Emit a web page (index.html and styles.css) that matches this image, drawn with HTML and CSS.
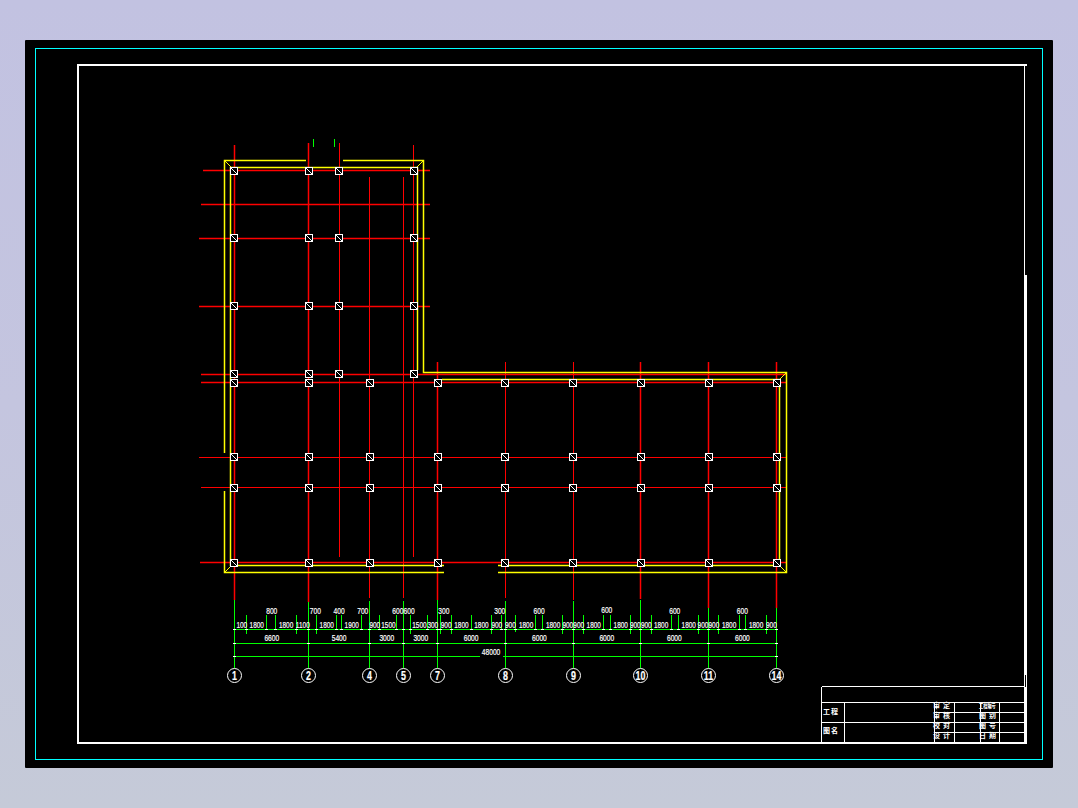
FILE: index.html
```html
<!DOCTYPE html>
<html lang="zh">
<head>
    <meta charset="UTF-8">
    <title>基础平面图</title>
    <link rel="stylesheet" href="styles.css">
</head>
<body>
    <div class="sheet">
        <svg class="drawing" viewBox="25 40 1028 728" width="1028" height="728">
            <defs>
                <g id="node">
                    <rect class="node-box" x="-3.5" y="-3.5" width="7" height="7"></rect>
                    <path class="node-cut" d="M-3 -3L3 3"></path>
                </g>
                <g id="upper-row">
                    <use href="#node" x="234"></use>
                    <use href="#node" x="309"></use>
                    <use href="#node" x="339"></use>
                    <use href="#node" x="414"></use>
                </g>
                <g id="lower-row">
                    <use href="#node" x="234"></use>
                    <use href="#node" x="309"></use>
                    <use href="#node" x="370"></use>
                    <use href="#node" x="438"></use>
                    <use href="#node" x="505"></use>
                    <use href="#node" x="573"></use>
                    <use href="#node" x="641"></use>
                    <use href="#node" x="709"></use>
                    <use href="#node" x="777"></use>
                </g>
            </defs>

            <!-- 图框 -->
            <rect class="cyan" x="35.5" y="48.5" width="1007" height="711"></rect>
            <path class="frame" d="M77 64H1027V66H1025V275H1027V744H77ZM79 66V742H1024V66ZM1025 675V687H1026V675Z"></path>

            <!-- 轴线 -->
            <path class="red" d="M339.5 143V557M369.5 177V598M403.5 177V598M413.5 145V557M505.5 362V598M573.5 362V600"></path>
            <path class="red heavy" d="M234.5 145V600M308.5 143V602M437.5 362V600M640.5 362V599M708.5 362V608M776.5 362V608"></path>
            <path class="red" d="M199 457.5H787M201 487.5H787"></path>
            <path class="red heavy" d="M203 170.5H430M201 204.5H430M199 238.5H430M199 306.5H430M201 374.5H787M201 382.5H787M200 562.5H787"></path>

            <!-- 墙线 -->
            <path class="yellow heavy" d="M224.5 453V160.5H306M343 160.5H423.5V372.5H786.5V572.5H498M444 572.5H224.5V491"></path>
            <path class="yellow heavy" d="M417.5 370V167.5H230.5V565.5H444M498 565.5H779.5V379.5H442"></path>
            <path class="yellow" d="M225 161L231 167M423 161L417 167M786 373L780 379M780 566L786 572M225 572L231 566"></path>

            <!-- 柱 -->
            <use href="#upper-row" y="171"></use>
            <use href="#upper-row" y="238"></use>
            <use href="#upper-row" y="306"></use>
            <use href="#upper-row" y="374"></use>
            <use href="#lower-row" y="383"></use>
            <use href="#lower-row" y="457"></use>
            <use href="#lower-row" y="488"></use>
            <use href="#lower-row" y="563"></use>

            <!-- 尺寸线 -->
            <path class="green" d="M313.5 139V147M334.5 139V147"></path>
            <path class="green" d="M234.5 600V668M308.5 602V668M369.5 601V668M403.5 601V668M437.5 600V668M505.5 601V668M573.5 601V668M640.5 600V668M708.5 608V668M776.5 608V668"></path>
            <path class="green" d="M234 629.5H777M234 643.5H777M234 656.5H480M503 656.5H777"></path>
            <path class="green" d="M246.5 615V634M266.5 615V629M275.5 615V629M296.5 615V634M316.5 615V634M336.5 615V629M341.5 615V629M361.5 615V629M379.5 615V629M396.5 615V629M410.5 615V634M427.5 615V629M440.5 615V634M451.5 615V634M471.5 615V629M491.5 615V634M501.5 615V629M515.5 615V632M535.5 615V629M542.5 615V629M562.5 615V634M583.5 615V634M603.5 615V629M610.5 615V629M630.5 615V634M651.5 615V634M671.5 615V629M678.5 615V629M698.5 615V634M718.5 615V634M739.5 615V629M745.5 615V629M766.5 615V634"></path>
            <path class="ticks" d="M233 629.5h3M245 629.5h3M265 629.5h3M274 629.5h3M295 629.5h3M307 629.5h3M315 629.5h3M335 629.5h3M340 629.5h3M360 629.5h3M368 629.5h3M378 629.5h3M395 629.5h3M402 629.5h3M409 629.5h3M426 629.5h3M436 629.5h3M439 629.5h3M450 629.5h3M470 629.5h3M490 629.5h3M500 629.5h3M504 629.5h3M514 629.5h3M534 629.5h3M541 629.5h3M561 629.5h3M572 629.5h3M582 629.5h3M602 629.5h3M609 629.5h3M629 629.5h3M639 629.5h3M650 629.5h3M670 629.5h3M677 629.5h3M697 629.5h3M707 629.5h3M717 629.5h3M738 629.5h3M744 629.5h3M765 629.5h3M775 629.5h3"></path>
            <path class="ticks" d="M233 643.5h3M307 643.5h3M368 643.5h3M402 643.5h3M436 643.5h3M504 643.5h3M572 643.5h3M639 643.5h3M707 643.5h3M775 643.5h3M233 656.5h3M775 656.5h3"></path>

            <!-- 分段尺寸 -->
            <g class="dim dim-fine">
                <text x="241.7" y="628">100</text>
                <text x="256.7" y="628">1800</text>
                <text x="286" y="628">1800</text>
                <text x="302.7" y="628">1100</text>
                <text x="326.7" y="628">1800</text>
                <text x="351.7" y="628">1900</text>
                <text x="374.7" y="628">900</text>
                <text x="388.3" y="628">1500</text>
                <text x="419.3" y="628">1500</text>
                <text x="432.7" y="628">300</text>
                <text x="446" y="628">900</text>
                <text x="461.3" y="628">1800</text>
                <text x="481.3" y="628">1800</text>
                <text x="496.7" y="628">900</text>
                <text x="510.3" y="628">900</text>
                <text x="526" y="628">1800</text>
                <text x="553" y="628">1800</text>
                <text x="567.7" y="628">900</text>
                <text x="578.6" y="628">900</text>
                <text x="593.7" y="628">1800</text>
                <text x="620.7" y="628">1800</text>
                <text x="635.2" y="628">900</text>
                <text x="646.2" y="628">900</text>
                <text x="661" y="628">1800</text>
                <text x="688.7" y="628">1800</text>
                <text x="702.9" y="628">900</text>
                <text x="713.8" y="628">900</text>
                <text x="729" y="628">1800</text>
                <text x="756" y="628">1800</text>
                <text x="771.3" y="628">900</text>
            </g>

            <!-- 柱距尺寸 -->
            <g class="dim">
                <text x="271.7" y="614">800</text>
                <text x="315.3" y="614">700</text>
                <text x="339" y="614">400</text>
                <text x="362.7" y="614">700</text>
                <text x="397.7" y="614">600</text>
                <text x="409" y="614">600</text>
                <text x="443.7" y="614">300</text>
                <text x="499.7" y="614">300</text>
                <text x="539" y="614">600</text>
                <text x="606.7" y="613">600</text>
                <text x="674.7" y="614">600</text>
                <text x="742.3" y="614">600</text>

                <text x="271.7" y="641">6600</text>
                <text x="339" y="641">5400</text>
                <text x="386.7" y="641">3000</text>
                <text x="420.7" y="641">3000</text>
                <text x="471" y="641">6000</text>
                <text x="539.3" y="641">6000</text>
                <text x="606.7" y="641">6000</text>
                <text x="674.3" y="641">6000</text>
                <text x="742.3" y="641">6000</text>

                <text x="491" y="655">48000</text>
            </g>

            <!-- 轴号 -->
            <g class="bubbles">
                <circle cx="234.5" cy="675.5" r="7"></circle>
                <circle cx="308.5" cy="675.5" r="7"></circle>
                <circle cx="369.5" cy="675.5" r="7"></circle>
                <circle cx="403.5" cy="675.5" r="7"></circle>
                <circle cx="437.5" cy="675.5" r="7"></circle>
                <circle cx="505.5" cy="675.5" r="7"></circle>
                <circle cx="573.5" cy="675.5" r="7"></circle>
                <circle cx="640.5" cy="675.5" r="7"></circle>
                <circle cx="708.5" cy="675.5" r="7"></circle>
                <circle cx="776.5" cy="675.5" r="7"></circle>
            </g>
            <g class="dim axis-no">
                <text x="234.5" y="680">1</text>
                <text x="308.5" y="680">2</text>
                <text x="369.5" y="680">4</text>
                <text x="403.5" y="680">5</text>
                <text x="437.5" y="680">7</text>
                <text x="505.5" y="680">8</text>
                <text x="573.5" y="680">9</text>
                <text x="640.5" y="680">10</text>
                <text x="708.5" y="680">11</text>
                <text x="776.5" y="680">14</text>
            </g>

            <!-- 图签 -->
            <path class="block" d="M821.5 686.5H1025M821.5 686.5V743M821.5 702.5H1025M821.5 722.5H934M934 712.5H1025M934 722.5H1025M934 732.5H1025M844.5 702.5V743M934.5 702.5V743M954.5 702.5V743M980.5 702.5V743M999.5 702.5V743"></path>
            <g class="block-text">
                <text x="823" y="714" textLength="15">工程</text>
                <text x="823" y="733" textLength="15">图名</text>
                <text x="933" y="708" textLength="17">审定</text>
                <text x="933" y="718" textLength="17">审核</text>
                <text x="933" y="728" textLength="17">校对</text>
                <text x="933" y="738" textLength="17">设计</text>
                <text class="dense" x="979" y="708">工程编号</text>
                <text x="979" y="718" textLength="17">图别</text>
                <text x="979" y="728" textLength="17">图号</text>
                <text x="979" y="738" textLength="17">日期</text>
            </g>
        </svg>
    </div>
</body>
</html>
```

FILE: styles.css
```css
html,body{
    margin: 0;
    padding: 0;
}
body{
    padding: 40px 25px;
    background-image: linear-gradient(to bottom,#c2c2e1,#c4c5df 50%,#c5cad8);
}
/* 模型空间 */
.sheet{
    width: 1028px;
    height: 728px;
    background: #000;
    border-radius: 1px;
}
.drawing{
    display: block;
    shape-rendering: crispEdges;
}
.drawing path,
.drawing rect{
    fill: none;
    stroke-width: 1;
}

/* 图层颜色 */
.cyan{
    stroke: #0ff;
}
.drawing .frame{
    fill: #fff;
    fill-rule: evenodd;
    stroke: none;
}
.red{
    stroke: #f00;
}
.yellow{
    stroke: #ff0;
}
.green{
    stroke: #0f0;
}
.ticks,
.block{
    stroke: #fff;
}
/* 粗线 */
.drawing .heavy{
    stroke-width: 1.5;
    shape-rendering: auto;
}

/* 柱 */
.drawing .node-box{
    fill: #000;
    stroke: #fff;
}
.node-cut{
    stroke: #fff;
}

/* 尺寸文字 : 窄字 */
.dim{
    font-family: "Liberation Sans", sans-serif;
    font-size: 9px;
    fill: #fff;
    stroke: #fff;
    stroke-width: .2;
    text-anchor: middle;
}
.dim text{
    transform-box: fill-box;
    transform-origin: center;
    transform: scaleX(.74);
}
.dim-fine{
    font-size: 9.5px;
}
.dim-fine text{
    transform: scaleX(.68);
}
.axis-no{
    font-size: 12px;
    font-weight: bold;
}
.bubbles circle{
    fill: #000;
    stroke: #fff;
    stroke-width: 1;
    shape-rendering: auto;
}

/* 图签文字 */
.block-text{
    font-family: "Liberation Sans", "Noto Sans CJK SC", sans-serif;
    font-size: 7px;
    font-weight: bold;
    fill: #fff;
}
.dense{
    transform-box: fill-box;
    transform-origin: left;
    transform: scaleX(.6);
}
```
